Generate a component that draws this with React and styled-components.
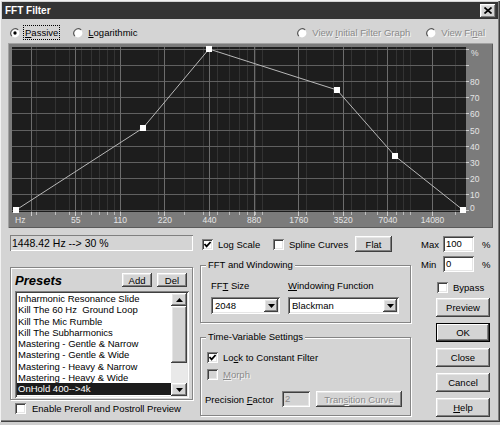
import React from "react";
import styled, { createGlobalStyle } from "styled-components";

const FACE = "#d4d4d4";
const RAISED =
  "inset -1px -1px 0 #404040, inset 1px 1px 0 #ffffff, inset -2px -2px 0 #808080, inset 2px 2px 0 #e6e6e6";
const SUNKEN =
  "inset 1px 1px 0 #808080, inset -1px -1px 0 #ffffff, inset 2px 2px 0 #404040, inset -2px -2px 0 #e6e6e6";

const GlobalStyle = createGlobalStyle`
  html, body { margin: 0; padding: 0; background: #cfcfcf; }
  body {
    font-family: "Liberation Sans", Arial, sans-serif;
    font-size: 9.5px;
    color: #000;
  }
  *, *::before, *::after { box-sizing: border-box; }
  u { text-underline-offset: 1px; }
`;

const Window = styled.div`
  width: 500px;
  height: 422px;
  padding: 2px;
  display: flex;
  flex-direction: column;
  background: ${FACE};
  box-shadow: inset 1px 1px 0 #f2f2f2, inset -1px -1px 0 #404040, inset -2px -2px 0 #808080;
`;

const TitleBar = styled.div`
  height: 17px;
  display: flex;
  align-items: center;
  justify-content: space-between;
  padding: 0 2px 0 3px;
  background: #343434;
  color: #fff;
  font-weight: bold;
  font-size: 10px;
`;

const CloseBox = styled.span`
  width: 16px;
  height: 14px;
  display: flex;
  align-items: center;
  justify-content: center;
  background: ${FACE};
  box-shadow: ${RAISED};
`;

const Content = styled.div`
  flex: 1;
  display: flex;
  flex-direction: column;
  padding: 0 5px 0 6px;
`;

const RadioRow = styled.div`
  height: 24px;
  display: flex;
  align-items: center;
  padding: 3px 7px 0 2px;
`;

const RadioItem = styled.label`
  display: flex;
  align-items: center;
  gap: 4px;
  margin-left: ${(p) => (p.$auto ? "auto" : `${p.$ml || 0}px`)};
  color: ${(p) => (p.$disabled ? "#8a8a8a" : "#000")};
  text-shadow: ${(p) => (p.$disabled ? "1px 1px 0 #f4f4f4" : "none")};
  svg { display: block; flex: none; }
`;

const RadioText = styled.span`
  padding: 1px 1px;
  outline: ${(p) => (p.$focus ? "1px dotted #000" : "none")};
`;

const GraphFrame = styled.div`
  width: 485px;
  height: 185px;
  background: #7b7b7b;
  box-shadow: inset 1px 1px 0 #a2a2a2, inset -1px -1px 0 #5a5a5a;
  svg { display: block; }
`;

const Bottom = styled.div`
  display: flex;
  margin: 7px 0 0 2px;
`;

const LeftCol = styled.div`
  width: 183px;
  display: flex;
  flex-direction: column;
`;

const MidCol = styled.div`
  width: 211px;
  margin-left: 7px;
  display: flex;
  flex-direction: column;
`;

const RightCol = styled.div`
  flex: 1;
  margin-left: 10px;
  display: flex;
  flex-direction: column;
  align-items: flex-start;
`;

const StatusBox = styled.div`
  height: 16px;
  line-height: 16px;
  padding-left: 2px;
  font-size: 10.5px;
  box-shadow: inset 1px 1px 0 #808080, inset -1px -1px 0 #ffffff;
`;

const Etched = styled.div`
  border: 1px solid #858585;
  box-shadow: inset 1px 1px 0 #fff, 1px 1px 0 #fff;
`;

const PresetsBox = styled(Etched)`
  margin-top: 16px;
  height: 133px;
  padding: 5px 3px 1px 4px;
  display: flex;
  flex-direction: column;
`;

const PresetsHead = styled.div`
  height: 14px;
  display: flex;
  align-items: center;
  gap: 5px;
  padding-right: 2px;
`;

const PresetsTitle = styled.span`
  flex: 1;
  font-size: 13px;
  font-weight: bold;
  font-style: italic;
`;

const ListBox = styled.div`
  margin-top: 4px;
  height: 107px;
  padding: 2px;
  display: flex;
  background: #fff;
  box-shadow: ${SUNKEN};
`;

const ListItems = styled.div`
  flex: 1;
  overflow: hidden;
`;

const ListItem = styled.div`
  height: 11.3px;
  line-height: 11.3px;
  padding-left: 1px;
  white-space: pre;
  background: ${(p) => (p.$selected ? "#1c1c1c" : "transparent")};
  color: ${(p) => (p.$selected ? "#fff" : "#000")};
`;

const ScrollBar = styled.div`
  width: 16px;
  display: flex;
  flex-direction: column;
`;

const ScrollArrow = styled.span`
  height: 13px;
  display: flex;
  align-items: center;
  justify-content: center;
  background: ${FACE};
  box-shadow: ${RAISED};
`;

const ScrollThumb = styled.span`
  height: 57px;
  background: ${FACE};
  box-shadow: ${RAISED};
`;

const ScrollTrack = styled.span`
  flex: 1;
  background: #e9e9e9;
`;

const CheckLabel = styled.label`
  display: flex;
  align-items: center;
  gap: ${(p) => p.$gap || 5}px;
  height: 12px;
  flex: none;
  width: ${(p) => (p.$w ? `${p.$w}px` : "auto")};
  margin-left: ${(p) => p.$ml || 0}px;
  margin-top: ${(p) => p.$mt || 0}px;
  color: ${(p) => (p.$disabled ? "#8a8a8a" : "#000")};
  text-shadow: ${(p) => (p.$disabled ? "1px 1px 0 #f4f4f4" : "none")};
`;

const CheckBox = styled.span`
  width: 11px;
  height: 11px;
  flex: none;
  background: ${(p) => (p.$disabled ? FACE : "#fff")};
  box-shadow: ${SUNKEN};
  svg { display: block; }
`;

const Btn = styled.button`
  font: inherit;
  width: ${(p) => p.$w}px;
  height: ${(p) => p.$h || 19}px;
  margin: ${(p) => p.$mt || 0}px ${(p) => p.$mr || 0}px 0 ${(p) => (p.$auto ? "auto" : `${p.$ml || 0}px`)};
  padding: 0;
  border: none;
  flex: none;
  background: ${FACE};
  color: ${(p) => (p.disabled ? "#8a8a8a" : "#000")};
  text-shadow: ${(p) => (p.disabled ? "1px 1px 0 #f6f6f6" : "none")};
  box-shadow: ${(p) =>
    p.$default
      ? "inset 0 0 0 1px #000, inset -2px -2px 0 #404040, inset 2px 2px 0 #fff, inset -3px -3px 0 #808080"
      : RAISED};
`;

const ToolRow = styled.div`
  height: 16px;
  margin-top: 1px;
  display: flex;
  align-items: center;
`;

const Group = styled(Etched)`
  margin-top: ${(p) => p.$mt}px;
  padding: 0 ${(p) => p.$px}px 8px ${(p) => p.$px}px;
`;

const Caption = styled.div`
  width: fit-content;
  margin: -7px 0 0 ${(p) => p.$ml}px;
  padding: 0 2px;
  line-height: 12px;
  background: ${FACE};
`;

const FieldGrid = styled.div`
  margin-top: 9px;
  display: flex;
  gap: 8px;
`;

const FieldCol = styled.div`
  display: flex;
  flex-direction: column;
  gap: 5px;
`;

const FieldLabel = styled.span`
  line-height: 12px;
`;

const Combo = styled.div`
  width: ${(p) => p.$w}px;
  height: 17px;
  padding: 2px;
  display: flex;
  align-items: stretch;
  background: #fff;
  box-shadow: ${SUNKEN};
`;

const ComboText = styled.span`
  flex: 1;
  padding-left: 2px;
  line-height: 13px;
`;

const ComboButton = styled.span`
  width: 14px;
  display: flex;
  align-items: center;
  justify-content: center;
  background: ${FACE};
  box-shadow: ${RAISED};
`;

const Row = styled.div`
  display: flex;
  align-items: center;
  height: ${(p) => p.$h || 12}px;
  margin-top: ${(p) => p.$mt || 0}px;
  padding-left: ${(p) => p.$pl || 0}px;
`;

const PrecisionLabel = styled.span`
  width: 77px;
  margin-left: -1px;
`;

const Field = styled.div`
  width: ${(p) => p.$w}px;
  height: 16px;
  line-height: 16px;
  padding-left: 3px;
  background: ${(p) => (p.$disabled ? FACE : "#fff")};
  color: ${(p) => (p.$disabled ? "#8a8a8a" : "#000")};
  box-shadow: ${SUNKEN};
`;

const RangeLabel = styled.span`
  width: 22px;
`;

const Pct = styled.span`
  margin-left: 8px;
`;

const PRESETS = [
  "Inharmonic Resonance Slide",
  "Kill The 60 Hz  Ground Loop",
  "Kill The Mic Rumble",
  "Kill The Subharmonics",
  "Mastering - Gentle & Narrow",
  "Mastering - Gentle & Wide",
  "Mastering - Heavy & Narrow",
  "Mastering - Heavy & Wide",
  "OnHold 400-->4k",
];

// graph geometry (relative to the frame)
const PL = 4, PR = 458, PT = 4, PB = 169;
const fx = (f) => 201 + 44.6 * Math.log2(f / 440);
const py = (p) => 167 - 1.61 * p;
const MAJOR = [27.5, 55, 110, 220, 440, 880, 1760, 3520, 7040, 14080];
const MINOR = [];
for (let d = 10; d <= 10000; d *= 10)
  for (let m = 1; m < 10; m++) {
    const x = fx(d * m);
    if (x > PL + 1 && x < PR - 1) MINOR.push(x);
  }
const PCTS = [0, 10, 20, 30, 40, 50, 60, 70, 80, 90, 100];
const POINTS = [
  [8, 167],
  [135, 85],
  [201, 6],
  [329, 47],
  [387, 113],
  [455, 167],
];
const px = (v) => Math.round(v) + 0.5;

const Arrow = ({ down }) => (
  <svg width="7" height="4" viewBox="0 0 7 4">
    <polygon points={down ? "0,0 7,0 3.5,4" : "0,4 7,4 3.5,0"} fill="#000" />
  </svg>
);

const Radio = ({ checked }) => (
  <svg width="10" height="10" viewBox="0 0 12 12">
    <circle cx="6" cy="6" r="5.3" fill="#fff" />
    <path d="M2.2 9.8 A5.4 5.4 0 0 1 9.8 2.2" fill="none" stroke="#555" strokeWidth="1.4" />
    {checked && <circle cx="6" cy="6" r="2" fill="#000" />}
  </svg>
);

const Check = ({ checked, disabled }) => (
  <CheckBox $disabled={disabled}>
    {checked && (
      <svg width="11" height="11" viewBox="0 0 11 11">
        <polyline points="2.5,5 4.6,7.3 8.6,3" fill="none" stroke="#000" strokeWidth="1.8" />
      </svg>
    )}
  </CheckBox>
);

function Graph() {
  const label = { fontFamily: "Liberation Sans, Arial, sans-serif", fontSize: 8.5, fill: "#e4e4e4" };
  return (
    <GraphFrame>
      <svg width="485" height="185" viewBox="0 0 485 185">
        <rect x={PL} y={PT} width={PR - PL} height={PB - PT} fill="#1d1d1d" />
        <g shapeRendering="crispEdges">
          {MINOR.map((x, i) => (
            <line key={`m${i}`} x1={px(x)} x2={px(x)} y1={PT} y2={PB} stroke="#333" />
          ))}
          {PCTS.map((p) => (
            <line key={`h${p}`} x1={PL} x2={PR} y1={px(py(p))} y2={px(py(p))} stroke="#606060" />
          ))}
          {MAJOR.map((f) => (
            <line key={`v${f}`} x1={px(fx(f))} x2={px(fx(f))} y1={PT} y2={PB + 4} stroke="#6c6c6c" />
          ))}
          {MINOR.map((x, i) => (
            <line key={`t${i}`} x1={px(x)} x2={px(x)} y1={PB} y2={PB + 3} stroke="#bdbdbd" />
          ))}
          {MAJOR.map((f) => (
            <line key={`tm${f}`} x1={px(fx(f))} x2={px(fx(f))} y1={PB} y2={PB + 4} stroke="#cfcfcf" />
          ))}
          {PCTS.map((p) => (
            <line key={`rt${p}`} x1={PR} x2={PR + 3} y1={px(py(p))} y2={px(py(p))} stroke="#cfcfcf" />
          ))}
        </g>
        <polyline
          points={POINTS.map((p) => p.join(",")).join(" ")}
          fill="none"
          stroke="#b8b8b8"
          strokeWidth="1"
        />
        {POINTS.map(([x, y]) => (
          <rect key={x} x={x - 3} y={y - 3} width="6" height="6" fill="#fff" />
        ))}
        <text x="7" y="180" style={label}>Hz</text>
        {MAJOR.slice(1).map((f) => (
          <text key={f} x={fx(f) + 0.5} y="180" textAnchor="middle" style={label}>
            {f}
          </text>
        ))}
        <text x="463" y="13" style={label}>%</text>
        {PCTS.slice(1, 9).map((p) => (
          <text key={p} x="462" y={py(p) + 4} style={label}>
            {p}
          </text>
        ))}
        <text x="462" y="168" style={label}>0</text>
      </svg>
    </GraphFrame>
  );
}

export default function App() {
  return (
    <>
      <GlobalStyle />
      <Window>
        <TitleBar>
          <span>FFT Filter</span>
          <CloseBox>
            <svg width="8" height="7" viewBox="0 0 8 7">
              <path d="M0.5 0.5 L7.5 6.5 M7.5 0.5 L0.5 6.5" stroke="#000" strokeWidth="1.7" />
            </svg>
          </CloseBox>
        </TitleBar>
        <Content>
          <RadioRow>
            <RadioItem>
              <Radio checked />
              <RadioText $focus>
                <u>P</u>assive
              </RadioText>
            </RadioItem>
            <RadioItem $ml={14}>
              <Radio />
              <RadioText>
                <u>L</u>ogarithmic
              </RadioText>
            </RadioItem>
            <RadioItem $auto $disabled>
              <Radio />
              <RadioText>
                View <u>I</u>nitial Filter Graph
              </RadioText>
            </RadioItem>
            <RadioItem $ml={15} $disabled>
              <Radio />
              <RadioText>
                View Fi<u>n</u>al
              </RadioText>
            </RadioItem>
          </RadioRow>

          <Graph />

          <Bottom>
            <LeftCol>
              <StatusBox>1448.42 Hz --&gt; 30 %</StatusBox>
              <PresetsBox>
                <PresetsHead>
                  <PresetsTitle>Presets</PresetsTitle>
                  <Btn $w={30} $h={14}>Add</Btn>
                  <Btn $w={30} $h={14}>Del</Btn>
                </PresetsHead>
                <ListBox>
                  <ListItems>
                    {PRESETS.map((p, i) => (
                      <ListItem key={p} $selected={i === PRESETS.length - 1}>
                        {p}
                      </ListItem>
                    ))}
                  </ListItems>
                  <ScrollBar>
                    <ScrollArrow>
                      <Arrow />
                    </ScrollArrow>
                    <ScrollThumb />
                    <ScrollTrack />
                    <ScrollArrow>
                      <Arrow down />
                    </ScrollArrow>
                  </ScrollBar>
                </ListBox>
              </PresetsBox>
              <CheckLabel $ml={5} $mt={2} $gap={6}>
                <Check />
                Enable Preroll and Postroll Preview
              </CheckLabel>
            </LeftCol>

            <MidCol>
              <ToolRow>
                <CheckLabel $ml={2} $w={71}>
                  <Check checked />
                  Log Scale
                </CheckLabel>
                <CheckLabel>
                  <Check />
                  Spline Curves
                </CheckLabel>
                <Btn $w={37} $h={16} $auto $mr={19}>
                  Flat
                </Btn>
              </ToolRow>

              <Group $mt={13} $px={10}>
                <Caption $ml={-5}>FFT and Windowing</Caption>
                <FieldGrid>
                  <FieldCol>
                    <FieldLabel>
                      FF<u>T</u> Size
                    </FieldLabel>
                    <Combo $w={69}>
                      <ComboText>2048</ComboText>
                      <ComboButton>
                        <Arrow down />
                      </ComboButton>
                    </Combo>
                  </FieldCol>
                  <FieldCol>
                    <FieldLabel>
                      <u>W</u>indowing Function
                    </FieldLabel>
                    <Combo $w={111}>
                      <ComboText>Blackman</ComboText>
                      <ComboButton>
                        <Arrow down />
                      </ComboButton>
                    </Combo>
                  </FieldCol>
                </FieldGrid>
              </Group>

              <Group $mt={14} $px={5}>
                <Caption $ml={0}>Time-Variable Settings</Caption>
                <Row $mt={8} $pl={1}>
                  <CheckLabel>
                    <Check checked />
                    <span>
                      Lo<u>c</u>k to Constant Filter
                    </span>
                  </CheckLabel>
                </Row>
                <Row $mt={5} $pl={1}>
                  <CheckLabel $disabled>
                    <Check disabled />
                    <span>
                      <u>M</u>orph
                    </span>
                  </CheckLabel>
                </Row>
                <Row $mt={11} $h={16}>
                  <PrecisionLabel>
                    Precision <u>F</u>actor
                  </PrecisionLabel>
                  <Field $w={28} $disabled>
                    2
                  </Field>
                  <Btn $w={86} $h={16} $ml={6} disabled>
                    Tran<u>s</u>ition Curve
                  </Btn>
                </Row>
              </Group>
            </MidCol>

            <RightCol>
              <Row $h={16} $mt={1}>
                <RangeLabel>Max</RangeLabel>
                <Field $w={31}>100</Field>
                <Pct>%</Pct>
              </Row>
              <Row $h={16} $mt={4}>
                <RangeLabel>Min</RangeLabel>
                <Field $w={31}>0</Field>
                <Pct>%</Pct>
              </Row>
              <CheckLabel $ml={16} $mt={9}>
                <Check />
                Bypass
              </CheckLabel>
              <Btn $w={54} $mt={5} $ml={15}>
                Preview
              </Btn>
              <Btn $w={54} $mt={6} $ml={15} $default>
                OK
              </Btn>
              <Btn $w={54} $mt={6} $ml={15}>
                Close
              </Btn>
              <Btn $w={54} $mt={6} $ml={15}>
                Cancel
              </Btn>
              <Btn $w={54} $mt={6} $ml={15}>
                <u>H</u>elp
              </Btn>
            </RightCol>
          </Bottom>
        </Content>
      </Window>
    </>
  );
}
